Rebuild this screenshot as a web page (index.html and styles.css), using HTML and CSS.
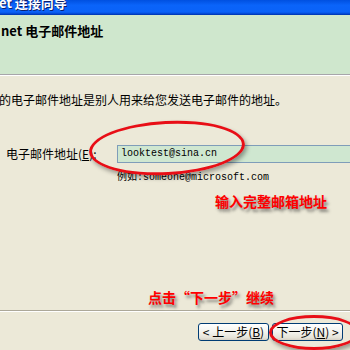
FILE: index.html
```html
<!DOCTYPE html>
<html lang="zh-CN">
<head>
    <meta charset="UTF-8">
    <title>Internet 连接向导</title>
    <link rel="stylesheet" href="styles.css">
</head>
<body>
    <div class="window">
        <!-- Title bar (clipped) -->
        <div class="titlebar"><span class="title">et 连接向导</span></div>

        <!-- Wizard header -->
        <div class="header">
            <h1>net 电子邮件地址</h1>
        </div>

        <!-- Page body -->
        <div class="page">
            <p class="intro">的电子邮件地址是别人用来给您发送电子邮件的地址。</p>
            <div class="field">
                <label class="field-label">电子邮件地址(<u>E</u>):</label>
                <div class="field-input">looktest@sina.cn</div>
            </div>
            <p class="example">例如:someone@microsoft.com</p>
            <p class="note note-input">输入完整邮箱地址</p>
            <p class="note note-next">点击“下一步”继续</p>
        </div>

        <!-- Buttons -->
        <div class="footer">
            <button class="btn">&lt; 上一步(<u>B</u>)</button>
            <button class="btn">下一步(<u>N</u>) &gt;</button>
        </div>

        <!-- Red annotation rings -->
        <div class="ring ring-input"></div>
        <div class="ring ring-next"></div>
    </div>
</body>
</html>
```
FILE: styles.css
```css
html, body {
    margin: 0;
    padding: 0;
}

body {
    width: 350px;
    height: 350px;
    overflow: hidden;
    background-color: #ECE9D8;
    font-family: "Noto Sans CJK SC", "DejaVu Sans", sans-serif;
    font-size: 12px;
    color: #000;
}

.window {
    position: relative;
    width: 350px;
    height: 350px;
    overflow: hidden;
}

.titlebar {
    height: 15px;
    overflow: hidden;
    background: linear-gradient(#0050E0 0%, #0A64FA 35%, #0A62F8 80%, #0040C8 95%, #00309C 100%);
}

.title {
    display: block;
    margin-top: -4px;
    margin-left: -1px;
    line-height: 14px;
    font-size: 13px;
    font-weight: bold;
    color: #fff;
    text-shadow: 1px 1px 0 #0A1E6E;
}

.header {
    height: 59px;
    background-color: #CFE7CD;
    border-bottom: 1px solid #A7A6AA;
    box-shadow: 0 1px 0 #fff;
    margin-bottom: 1px;
}

.header h1 {
    margin: 0;
    padding: 8px 0 0 1px;
    font-size: 13px;
    line-height: 16px;
    font-weight: bold;
}

.page {
    display: flow-root;
    height: 234px;
}

.page p {
    margin: 0;
}

.intro {
    margin-top: 17px !important;
    margin-left: -1px !important;
    line-height: 14px;
    white-space: nowrap;
}

.field {
    display: flex;
    align-items: center;
    margin-top: 38px;
    padding-left: 6px;
}

.field-label {
    width: 111px;
    flex-shrink: 0;
    line-height: 14px;
}

.field-input {
    width: 260px;
    flex-shrink: 0;
    height: 18px;
    box-sizing: border-box;
    padding-left: 3px;
    background-color: #CFE7D0;
    border: 1px solid #7F9DB9;
    font-family: "Liberation Mono", monospace;
    font-size: 10px;
    line-height: 16px;
}

.example {
    margin-top: 8px !important;
    padding-left: 117px;
    line-height: 14px;
    font-family: "Liberation Mono", "Noto Sans CJK SC", monospace;
    font-size: 10px;
}

.note {
    font-size: 14px;
    line-height: 14px;
    font-weight: bold;
    color: #FF0000;
    text-shadow: 2px 3px 3px rgba(40, 40, 40, 0.55);
    white-space: nowrap;
}

.note-input {
    margin-top: 9px !important;
    padding-left: 215px;
}

.note-next {
    margin-top: 82px !important;
    padding-left: 148px;
}

.footer {
    display: flex;
    justify-content: flex-end;
    gap: 3px;
    padding: 12px 7px 0 0;
    border-top: 1px solid #ACA899;
    box-shadow: inset 0 1px 0 #fff;
}

.btn {
    width: 71px;
    height: 18px;
    padding: 0;
    box-sizing: border-box;
    border: 1px solid #003C74;
    border-radius: 3px;
    background: linear-gradient(#FFFFFF 0%, #F4F3EE 50%, #E6E3D8 85%, #D6D0C5 100%);
    font-family: "Noto Sans CJK SC", sans-serif;
    font-size: 12px;
    line-height: 16px;
    color: #000;
}

.ring {
    position: absolute;
    border: 3px solid #E80E16;
    border-radius: 50%;
    box-shadow: 2px 3px 4px rgba(0, 0, 0, 0.35);
}

.ring-input {
    left: 89px;
    top: 121px;
    width: 150px;
    height: 48px;
    transform: rotate(-3deg);
}

.ring-next {
    left: 269px;
    top: 315px;
    width: 84px;
    height: 29px;
}
```
